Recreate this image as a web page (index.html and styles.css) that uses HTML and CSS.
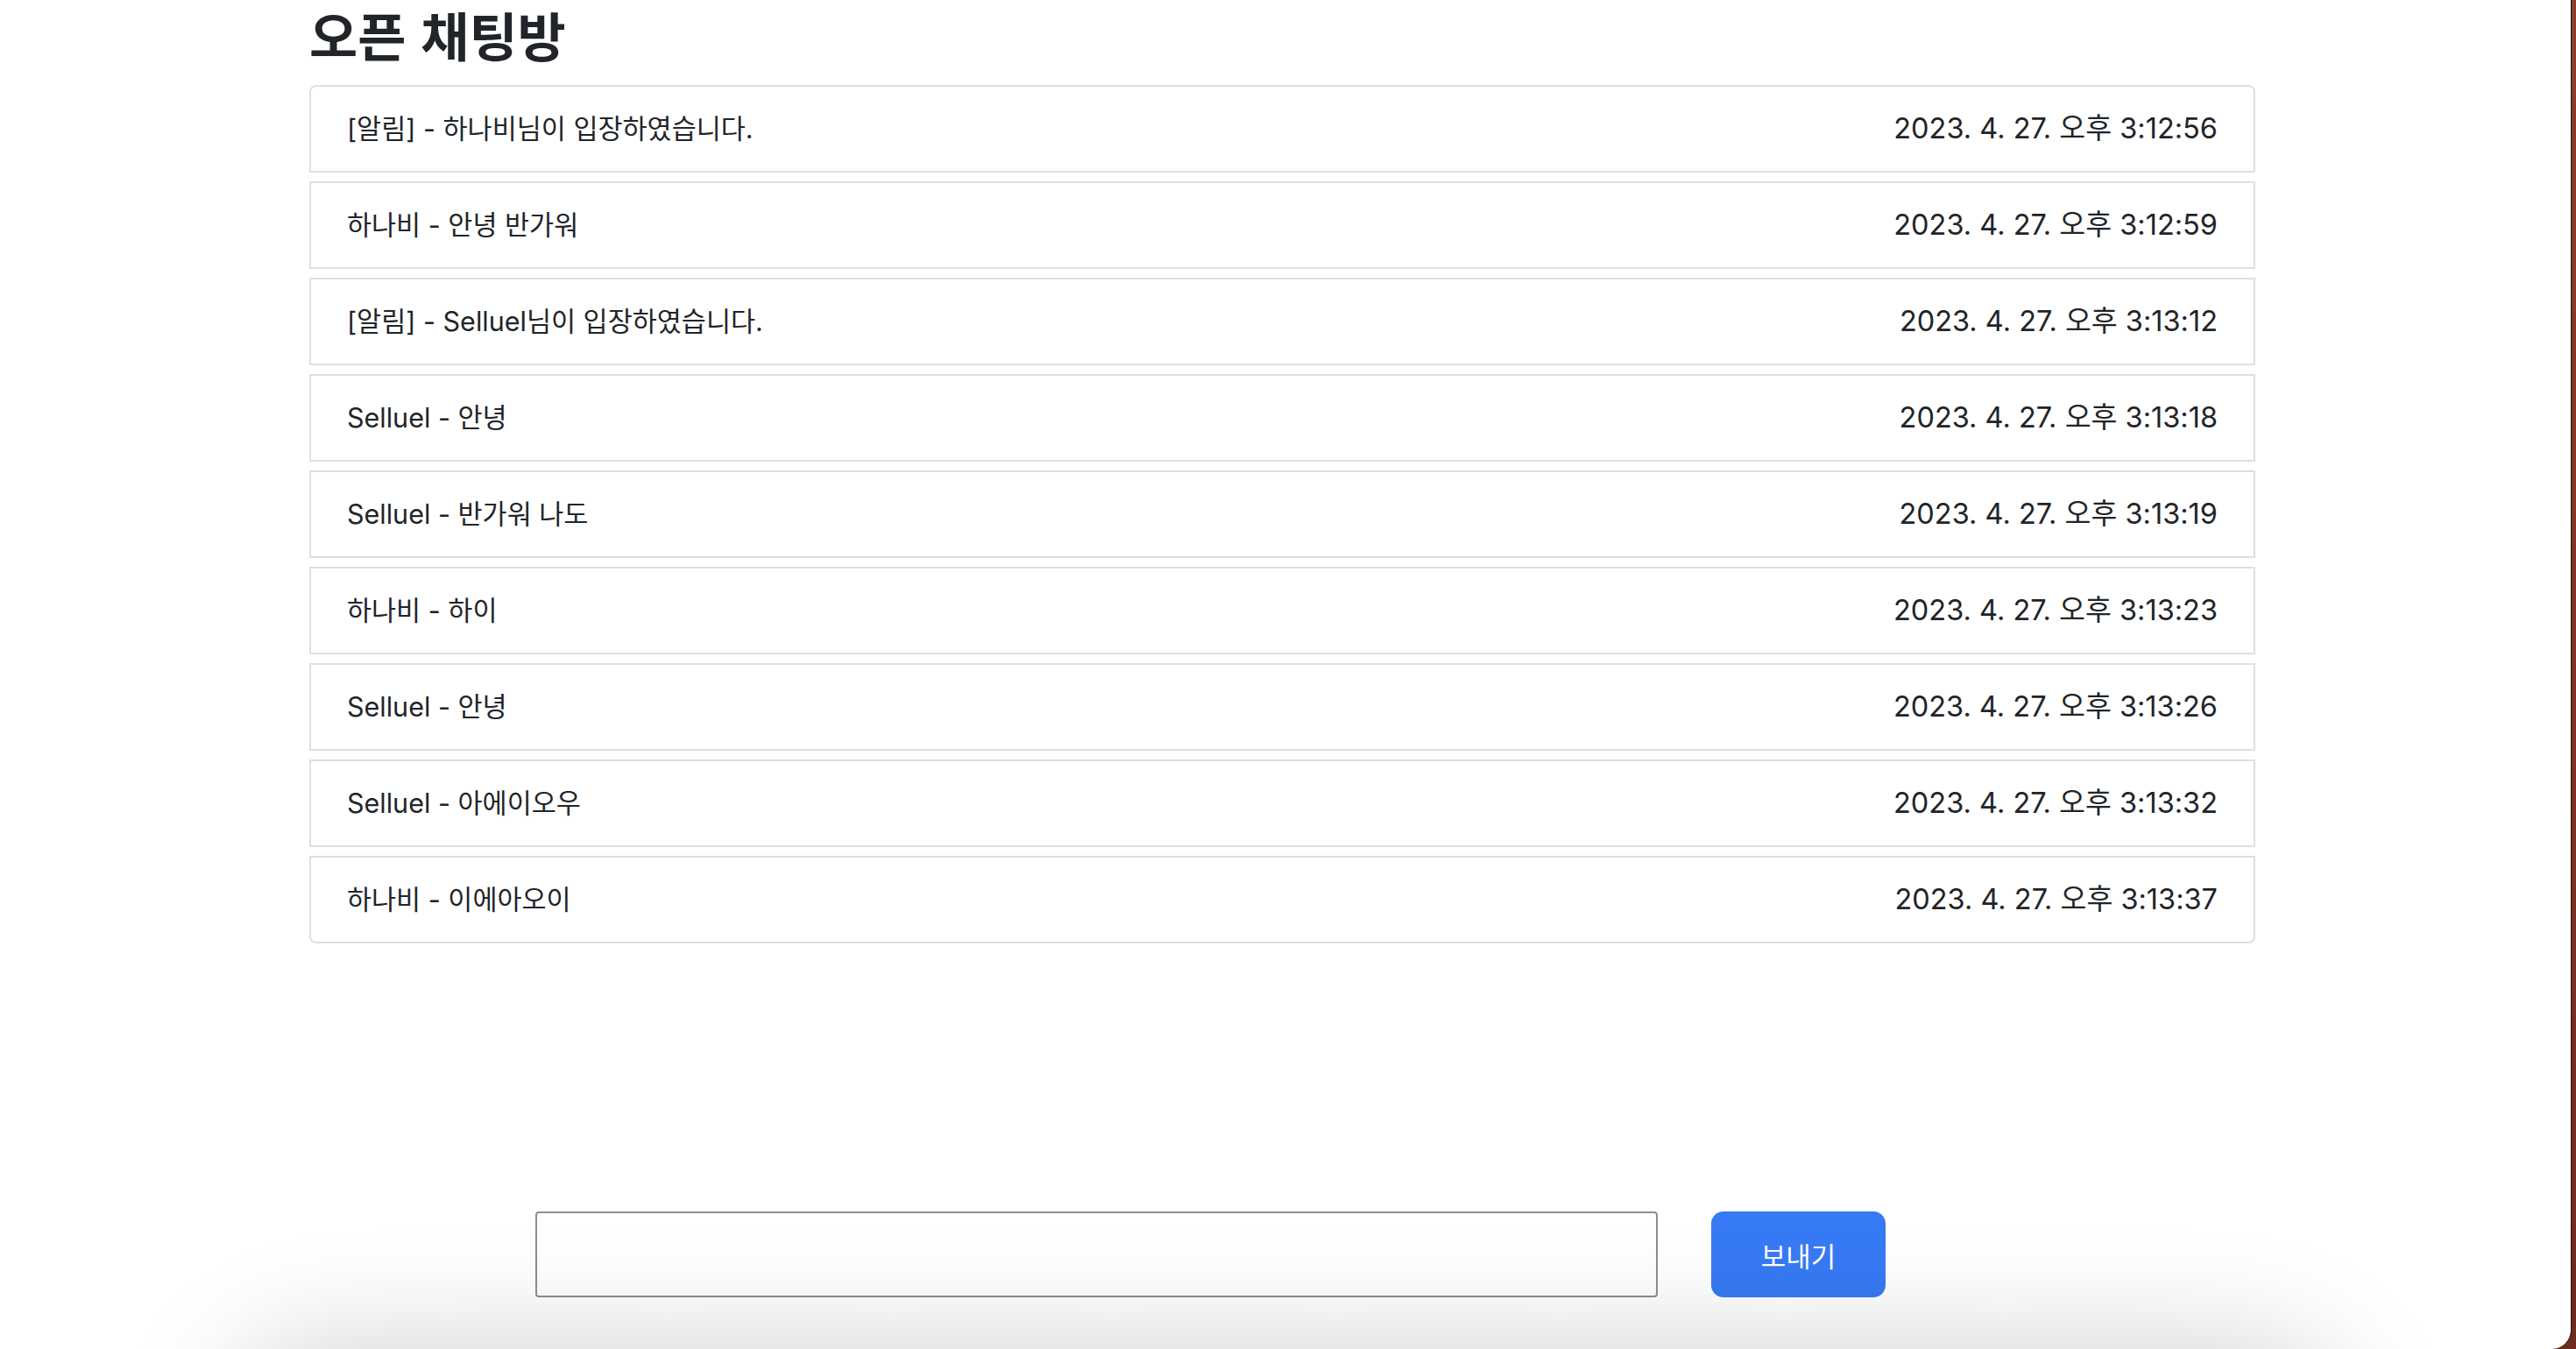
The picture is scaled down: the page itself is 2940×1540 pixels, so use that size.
FILE: index.html
```html
<!DOCTYPE html>
<html lang="ko">
<head>
<meta charset="utf-8">
<title>오픈 채팅방</title>
<link rel="stylesheet" href="styles.css">
</head>
<body>
<div class="window">
  <div class="container">
    <h2 class="title">오픈 채팅방</h2>
    <ul class="chat-list">
      <li class="chat-item"><span class="msg">[알림] - 하나비님이 입장하였습니다.</span><span class="time">2023. 4. 27. 오후 3:12:56</span></li>
      <li class="chat-item"><span class="msg">하나비 - 안녕 반가워</span><span class="time">2023. 4. 27. 오후 3:12:59</span></li>
      <li class="chat-item"><span class="msg">[알림] - Selluel님이 입장하였습니다.</span><span class="time">2023. 4. 27. 오후 3:13:12</span></li>
      <li class="chat-item"><span class="msg">Selluel - 안녕</span><span class="time">2023. 4. 27. 오후 3:13:18</span></li>
      <li class="chat-item"><span class="msg">Selluel - 반가워 나도</span><span class="time">2023. 4. 27. 오후 3:13:19</span></li>
      <li class="chat-item"><span class="msg">하나비 - 하이</span><span class="time">2023. 4. 27. 오후 3:13:23</span></li>
      <li class="chat-item"><span class="msg">Selluel - 안녕</span><span class="time">2023. 4. 27. 오후 3:13:26</span></li>
      <li class="chat-item"><span class="msg">Selluel - 아에이오우</span><span class="time">2023. 4. 27. 오후 3:13:32</span></li>
      <li class="chat-item"><span class="msg">하나비 - 이에아오이</span><span class="time">2023. 4. 27. 오후 3:13:37</span></li>
    </ul>
  </div>
  <form class="send-form">
    <input class="send-input" type="text">
    <button class="send-btn" type="button">보내기</button>
  </form>
  <div class="bottom-shadow"></div>
</div>
</body>
</html>
```

FILE: styles.css
```css
html, body {
  margin: 0;
  padding: 0;
  width: 2940px;
  height: 1540px;
  overflow: hidden;
  background: linear-gradient(180deg, #8c3d2c 0%, #6e2a1c 100%);
}

.window {
  position: relative;
  width: 2934px;
  height: 1540px;
  background: #ffffff;
  border-right: 1px solid #141010;
  border-bottom-right-radius: 22px;
  overflow: hidden;
  font-family: Inter, "Noto Sans CJK KR", sans-serif;
  color: #212529;
}

.container {
  width: 2221px;
  margin-left: 353px;
}

.title {
  margin: 0;
  padding-top: 7px;
  height: 64px;
  margin-bottom: 26px;
  font-family: "Noto Sans CJK KR", sans-serif;
  font-size: 60px;
  line-height: 64px;
  font-weight: 700;
  color: #212529;
}

.chat-list {
  list-style: none;
  margin: 0;
  padding: 0;
  display: flex;
  flex-direction: column;
  gap: 10px;
}

.chat-item {
  display: flex;
  justify-content: space-between;
  align-items: center;
  height: 96px;
  padding: 0 41px 0 41px;
  border: 2px solid #dfdfdf;
  font-size: 30.5px;
  line-height: 48px;
}

.time {
  font-size: 32.5px;
}

.chat-item:first-child {
  border-top-left-radius: 8px;
  border-top-right-radius: 8px;
}

.chat-item:last-child {
  border-bottom-left-radius: 8px;
  border-bottom-right-radius: 8px;
}

.send-form {
  display: flex;
  gap: 61px;
  margin: 306px 0 0 611px;
}

.send-input {
  box-sizing: border-box;
  width: 1281px;
  height: 98px;
  border: 2px solid #8f8d96;
  border-radius: 4px;
  background: #fff;
  padding: 0 20px;
  font-size: 32px;
  outline: none;
}

.send-btn {
  box-sizing: border-box;
  width: 199px;
  height: 98px;
  border: none;
  border-radius: 14px;
  background: #377af5;
  color: #ffffff;
  font-family: "Noto Sans CJK KR", sans-serif;
  font-size: 31px;
  line-height: 1;
}

.bottom-shadow {
  position: absolute;
  left: 320px;
  right: 320px;
  top: 1610px;
  height: 120px;
  border-radius: 120px;
  box-shadow: 0 0 140px 70px rgba(0, 0, 0, 0.2);
  pointer-events: none;
}
```
